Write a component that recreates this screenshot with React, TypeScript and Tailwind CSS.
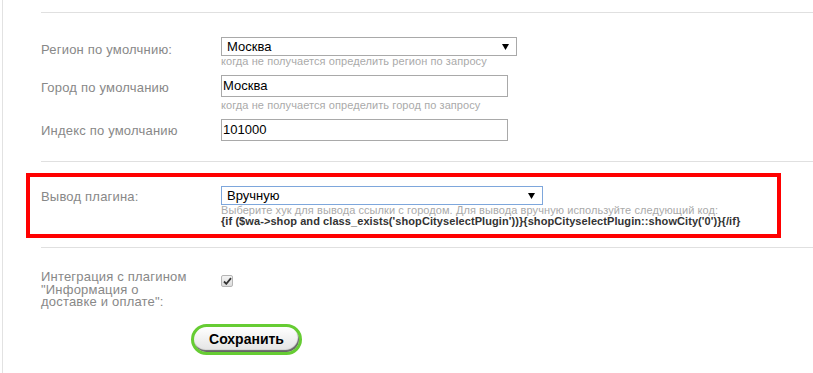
import React from 'react';

// fake native select, drawn with divs so the arrow matches the screenshot
function FakeSelect({ value, width, focused }: { value: string; width: string; focused?: boolean }) {
    return (
        <div
            className={`relative h-[19px] ${width} border bg-white flex items-center pl-[5px] text-[13px] text-black leading-none ${focused ? 'border-[#7ea7dc]' : 'border-[#a9a9a9]'
                }`}
        >
            <span>{value}</span>
            <svg className="absolute right-[7px] top-[6px]" width="7" height="6" viewBox="0 0 7 6">
                <polygon points="0,0 7,0 3.5,6" fill="#000" />
            </svg>
        </div>
    );
}

function Hint({ children }: { children: React.ReactNode }) {
    return <div className="text-[11px] leading-[11px] tracking-[0.08px] text-[#aaaaaa] whitespace-nowrap">{children}</div>;
}

export default function App() {
    return (
        <div className="min-h-[373px] bg-white font-['Liberation_Sans',Arial,sans-serif] flex">
            <div className="ml-[2px] border-l border-[#e2e2e2]" />
            <div className="flex-1 pl-[38px] pt-[12px]">
                <div className="border-t border-[#e0e0e0]" />

                {/* Регион */}
                <div className="flex mt-[24px]">
                    <div className="w-[180px] pt-[5px] text-[13px] leading-[15px] tracking-[0.2px] text-[#888]">Регион по умолчнию:</div>
                    <div>
                        <FakeSelect value="Москва" width="w-[296px]" />
                        <Hint>когда не получается определить регион по запросу</Hint>
                    </div>
                </div>

                {/* Город */}
                <div className="flex mt-[8px]">
                    <div className="w-[180px] pt-[5px] text-[13px] leading-[15px] tracking-[0.2px] text-[#888]">Город по умолчанию</div>
                    <div>
                        <div className="h-[22px] w-[287px] border border-[#a9a9a9] flex items-center pl-[1px] text-[13px] text-black">
                            Москва
                        </div>
                        <div className="mt-[3px]">
                            <Hint>когда не получается определить город по запросу</Hint>
                        </div>
                    </div>
                </div>

                {/* Индекс */}
                <div className="flex mt-[8px]">
                    <div className="w-[180px] pt-[4px] text-[13px] leading-[15px] tracking-[0.2px] text-[#888]">Индекс по умолчанию</div>
                    <div className="h-[22px] w-[287px] border border-[#a9a9a9] flex items-center pl-[1px] text-[13px] text-black">
                        101000
                    </div>
                </div>

                <div className="mt-[20px] border-t border-[#e0e0e0]" />

                {/* Вывод плагина, highlighted */}
                <div className="mt-[11px] -ml-[15px] w-[755px] h-[65px] border-[4px] border-[#ff0000] pl-[11px] pt-[9px] flex">
                    <div className="w-[180px] pt-[3px] text-[13px] leading-[15px] tracking-[0.2px] text-[#888]">Вывод плагина:</div>
                    <div>
                        <FakeSelect value="Вручную" width="w-[322px]" focused />
                        <Hint>Выберите хук для вывода ссылки с городом. Для вывода вручную используйте следующий код:</Hint>
                        <div className="text-[11px] leading-[11px] tracking-[0.08px] font-bold text-[#333] whitespace-nowrap">
                            {"{if ($wa->shop and class_exists('shopCityselectPlugin'))}{shopCityselectPlugin::showCity('0')}{/if}"}
                        </div>
                    </div>
                </div>

                <div className="mt-[9px] border-t border-[#e0e0e0]" />

                {/* Интеграция */}
                <div className="flex pt-[23px]">
                    <div className="w-[180px] text-[13px] leading-[12.5px] tracking-[0.2px] text-[#888] pr-[30px]">
                        Интеграция с плагином "Информация о доставке и оплате":
                    </div>
                    <div className="mt-[4px] w-[12px] h-[12px] rounded-[2px] border border-[#b5b5b5] bg-gradient-to-b from-[#f4f4f4] to-[#dcdcdc] flex items-center justify-center">
                        <svg width="9" height="8" viewBox="0 0 9 8">
                            <path d="M1 4.5 L3.3 6.8 L8 1.2" stroke="#333" strokeWidth="1.8" fill="none" />
                        </svg>
                    </div>
                </div>

                <div className="mt-[15px] pl-[150px]">
                    <button className="h-[31px] w-[111px] rounded-full border-[3px] border-[#66cc33] bg-gradient-to-b from-white to-[#e2e2e2] shadow-[inset_-1px_-2px_1px_#666] text-[14px] font-bold text-black">
                        Сохранить
                    </button>
                </div>
            </div>
        </div>
    );
}
